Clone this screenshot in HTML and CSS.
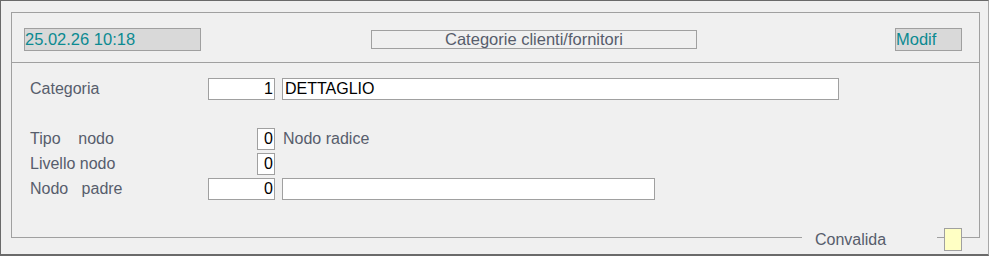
FILE: index.html
```html
<!DOCTYPE html>
<html lang="it">
<head>
    <meta charset="UTF-8">
    <title>Categorie clienti/fornitori</title>
    <link rel="stylesheet" href="styles.css">
</head>
<body>
    <div class="window">
        <div class="frame">
            <div class="header">
                <div class="hfield date">25.02.26 10:18</div>
                <div class="title">Categorie clienti/fornitori</div>
                <div class="hfield mode">Modif</div>
            </div>
            <div class="form">
                <div class="row">
                    <span class="label">Categoria</span>
                    <div class="code"><span class="field num wide">1</span></div>
                    <span class="field desc long">DETTAGLIO</span>
                </div>
                <div class="row"></div>
                <div class="row">
                    <span class="label">Tipo    nodo</span>
                    <div class="code"><span class="field num small">0</span></div>
                    <span class="note">Nodo radice</span>
                </div>
                <div class="row">
                    <span class="label">Livello nodo</span>
                    <div class="code"><span class="field num small">0</span></div>
                </div>
                <div class="row">
                    <span class="label">Nodo   padre</span>
                    <div class="code"><span class="field num wide">0</span></div>
                    <span class="field desc short"></span>
                </div>
            </div>
        </div>
        <div class="footer">
            <div class="rule left"></div>
            <span class="conv-label">Convalida</span>
            <div class="rule tick"></div>
            <div class="check"></div>
            <div class="rule end"></div>
        </div>
    </div>
</body>
</html>
```

FILE: styles.css
```css
body{
    margin: 0;
    background: #f0f0f0;
    font-family: "Liberation Sans", Arial, sans-serif;
    font-size: 16px;
}
.window{
    width: 989px;
    height: 256px;
    box-sizing: border-box;
    border-top: 1px solid #6a6a6a;
    border-left: 1px solid #6a6a6a;
    border-bottom: 2px solid #6a6a6a;
    border-right: 1px solid #a8a8a8;
    padding: 11px 0 0 10px;
}
.frame{
    width: 969px;
    height: 225px;
    box-sizing: border-box;
    border: 1px solid #a0a0a0;
    border-bottom: none;
}
.header{
    display: flex;
    align-items: flex-start;
    height: 50px;
    box-sizing: border-box;
    padding: 15px 0 0 12px;
    border-bottom: 1px solid #a0a0a0;
    font-size: 16.5px;
}
.hfield{
    height: 23px;
    box-sizing: border-box;
    border: 1px solid #a0a0a0;
    background: #d9d9d9;
    color: #0b8a91;
    line-height: 21px;
}
.date{
    width: 177px;
}
.title{
    width: 326px;
    height: 19px;
    margin: 2px 0 0 170px;
    box-sizing: border-box;
    border: 1px solid #a0a0a0;
    text-align: center;
    line-height: 17px;
    color: #575d6c;
}
.mode{
    width: 67px;
    margin-left: auto;
    margin-right: 17px;
}
.form{
    padding: 15px 0 0 18px;
}
.row{
    display: flex;
    align-items: flex-start;
    height: 25px;
}
.label{
    width: 178px;
    white-space: pre;
    color: #575d6c;
    line-height: 22px;
}
.code{
    width: 67px;
    display: flex;
    justify-content: flex-end;
}
.field{
    height: 22px;
    box-sizing: border-box;
    border: 1px solid #a0a0a0;
    background: #fff;
    color: #000;
    line-height: 20px;
}
.num{
    text-align: right;
    padding-right: 1px;
}
.wide{
    width: 67px;
}
.small{
    width: 18px;
}
.desc{
    margin-left: 7px;
    padding-left: 2px;
}
.long{
    width: 557px;
}
.short{
    width: 373px;
}
.note{
    margin-left: 8px;
    color: #575d6c;
    line-height: 22px;
}
.footer{
    display: flex;
    align-items: flex-start;
    width: 969px;
    height: 23px;
    margin-top: -9px;
}
.rule{
    height: 1px;
    margin-top: 9px;
    background: #a0a0a0;
}
.left{
    width: 791px;
}
.conv-label{
    width: 122px;
    margin-left: 13px;
    color: #575d6c;
    line-height: 23px;
}
.tick{
    width: 7px;
}
.check{
    width: 18px;
    height: 23px;
    box-sizing: border-box;
    border: 1px solid #a0a0a0;
    background: #ffffc4;
}
.end{
    width: 18px;
}
```
